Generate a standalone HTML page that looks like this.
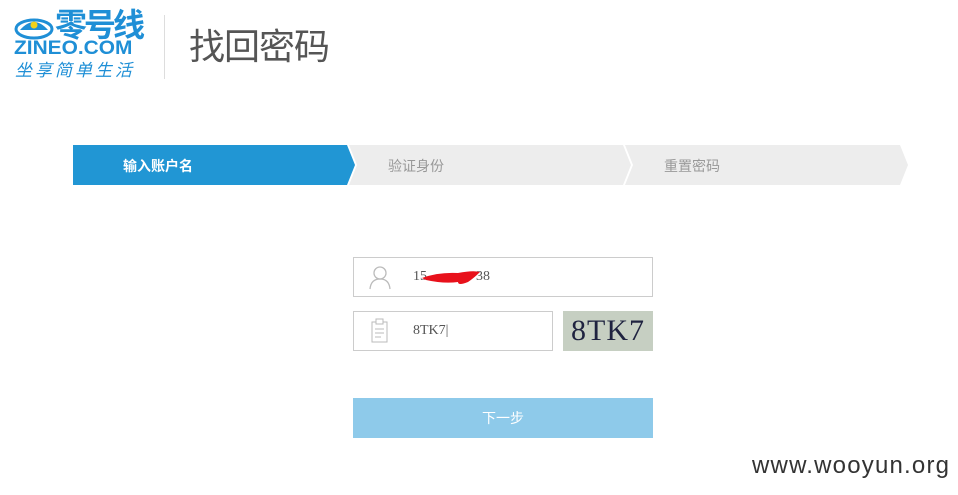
<!DOCTYPE html>
<html><head><meta charset="utf-8"><style>
body{margin:0;width:958px;height:495px;background:#fff;position:relative;overflow:hidden;font-family:"Liberation Sans","Noto Sans CJK SC",sans-serif}
.a{position:absolute}
</style></head><body>
<svg class="a" style="left:14px;top:14px" width="40" height="26" viewBox="0 0 40 26"><ellipse cx="20" cy="15" rx="18" ry="9" fill="none" stroke="#1f8fd6" stroke-width="3"/><path d="M6 16 Q20 0 34 16" fill="#1f8fd6"/><circle cx="20" cy="11" r="3.5" fill="#f2d21a"/></svg>
<div class="a" style="left:55px;top:6px;font-size:32px;font-weight:bold;color:#1f8fd6;line-height:38px;letter-spacing:-3px">零号线</div>
<div class="a" style="left:14px;top:39px;font-size:19px;font-weight:bold;color:#1f8fd6;line-height:20px;transform:scaleX(1.1);transform-origin:left">ZINEO.COM</div>
<div class="a" style="left:15px;top:61px;font-size:17px;color:#1f8fd6;line-height:20px;letter-spacing:3px;font-style:italic">坐享简单生活</div>
<div class="a" style="left:164px;top:15px;width:1px;height:64px;background:#ddd"></div>
<div class="a" style="left:189px;top:25px;font-size:36px;color:#555;line-height:44px;letter-spacing:-1px">找回密码</div>
<svg class="a" style="left:73px;top:145px" width="840" height="40">
<polygon points="552,0 827,0 835,20 827,40 552,40 560,20" fill="#ededed"/>
<polygon points="276,0 550,0 558,20 550,40 276,40 284,20" fill="#ededed"/>
<polygon points="0,0 274,0 282,20 274,40 0,40" fill="#2196d4"/>
</svg>
<div class="a" style="left:123px;top:156px;font-size:14px;font-weight:bold;color:#fff">输入账户名</div>
<div class="a" style="left:388px;top:156px;font-size:14px;color:#999">验证身份</div>
<div class="a" style="left:664px;top:156px;font-size:14px;color:#999">重置密码</div>
<div class="a" style="left:353px;top:257px;width:298px;height:38px;border:1px solid #ccc"></div>
<svg class="a" style="left:368px;top:264px" width="24" height="26"><circle cx="12" cy="9" r="6" fill="none" stroke="#bbb" stroke-width="1.3"/><path d="M2 25 Q3 15 12 15 Q21 15 22 25" fill="none" stroke="#bbb" stroke-width="1.3"/></svg>
<div class="a" style="left:413px;top:269px;font-size:14px;color:#555;font-family:'Liberation Serif',serif">15&nbsp;&nbsp;&nbsp;&nbsp;&nbsp;&nbsp;&nbsp;&nbsp;&nbsp;&nbsp;&nbsp;&nbsp;&nbsp;&nbsp;38</div>
<svg class="a" style="left:418px;top:266px" width="66" height="24"><path d="M4 12 Q20 6 40 7 Q55 4 62 6 Q56 12 50 16 Q40 20 40 16 Q26 18 8 14 Z" fill="#e8111b"/></svg>
<div class="a" style="left:353px;top:311px;width:198px;height:38px;border:1px solid #ccc"></div>
<svg class="a" style="left:370px;top:318px" width="20" height="26"><rect x="2" y="4" width="15" height="20" fill="none" stroke="#bbb"/><rect x="6" y="1" width="7" height="5" fill="#fff" stroke="#bbb"/><path d="M5 11h9M5 15h9M5 19h6" stroke="#bbb"/></svg>
<div class="a" style="left:413px;top:323px;font-size:14px;color:#555;font-family:'Liberation Serif',serif">8TK7|</div>
<div class="a" style="left:563px;top:311px;width:90px;height:40px;background:#c6cfc2;font-size:30px;color:#1f2340;line-height:40px;text-align:center;letter-spacing:1px;font-family:'Liberation Sans Narrow','Liberation Serif',serif">8TK7</div>
<div class="a" style="left:353px;top:398px;width:300px;height:40px;background:#8ecaea;color:#fff;font-size:14px;text-align:center;line-height:40px">下一步</div>
<div class="a" style="left:752px;top:452px;font-size:24px;color:#333;letter-spacing:1.2px">www.wooyun.org</div>
</body></html>
